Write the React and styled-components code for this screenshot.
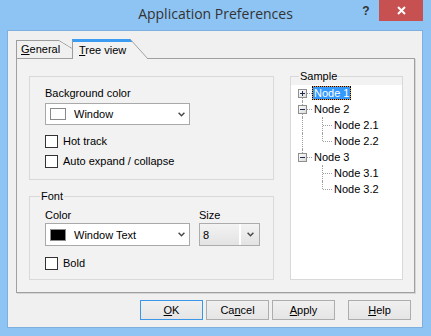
import React from 'react';
import styled, { createGlobalStyle } from 'styled-components';

const GlobalStyle = createGlobalStyle`
  * { box-sizing: border-box; }
  html, body { margin: 0; padding: 0; background: #8dc4f4; }
  body {
    font-family: "Liberation Sans", Arial, sans-serif;
    font-size: 11px;
    color: #000;
  }
`;

const treeRows = [
  { label: 'Node 1', selected: true, gutters: [{ down: true, right: true, box: '+' }] },
  { label: 'Node 2', gutters: [{ up: true, down: true, right: true, box: '-' }] },
  { label: 'Node 2.1', gutters: [{ up: true, down: true }, { up: true, down: true, right: true }] },
  { label: 'Node 2.2', gutters: [{ up: true, down: true }, { up: true, right: true }] },
  { label: 'Node 3', gutters: [{ up: true, right: true, box: '-' }] },
  { label: 'Node 3.1', gutters: [{}, { up: true, down: true, right: true }] },
  { label: 'Node 3.2', gutters: [{}, { up: true, right: true }] },
];

const Chevron = () => (
  <svg width="7" height="5" viewBox="0 0 7 5">
    <path d="M0.6 0.8 L3.5 3.7 L6.4 0.8" fill="none" stroke="#4a4a4a" strokeWidth="1.5" />
  </svg>
);

const Expander = ({ sign }) => (
  <ExpanderBox width="9" height="9" viewBox="0 0 9 9">
    <defs>
      <linearGradient id={`eg${sign === '+' ? 'p' : 'm'}`} x1="0" y1="0" x2="1" y2="1">
        <stop offset="0" stopColor="#ffffff" />
        <stop offset="1" stopColor="#d8d8d8" />
      </linearGradient>
    </defs>
    <rect x="0.5" y="0.5" width="8" height="8" fill={`url(#eg${sign === '+' ? 'p' : 'm'})`} stroke="#8e8f8f" />
    <path d="M2 4.5 H7" stroke="#1f2f4a" strokeWidth="1" />
    {sign === '+' && <path d="M4.5 2 V7" stroke="#1f2f4a" strokeWidth="1" />}
  </ExpanderBox>
);

export default function App() {
  return (
    <>
      <GlobalStyle />
      <Frame>
        <TitleBar>
          <span />
          <Title>Application Preferences</Title>
          <Controls>
            <HelpGlyph>?</HelpGlyph>
            <CloseButton>
              <svg width="9" height="9" viewBox="0 0 9 9">
                <path d="M1 1 L8 8 M8 1 L1 8" stroke="#fff" strokeWidth="2" />
              </svg>
            </CloseButton>
          </Controls>
        </TitleBar>

        <Client>
          <TabStrip>
            <Tab $width={57} $pad={4} $slantW={15} $slantH={9}>
              <span><u>G</u>eneral</span>
            </Tab>
            <Tab $active $width={76} $pad={6} $slantW={18} $slantH={20}>
              <span><u>T</u>ree view</span>
            </Tab>
          </TabStrip>

          <Panel>
            <LeftColumn>
              <PlainGroup>
                <FieldLabel>Background color</FieldLabel>
                <Combo $width={145} $height={22} $top={3}>
                  <Swatch $color="#fff" />
                  <ComboText>Window</ComboText>
                  <ArrowSlot><Chevron /></ArrowSlot>
                </Combo>
                <CheckRow $gap={10}><CheckBox />Hot track</CheckRow>
                <CheckRow $gap={7}><CheckBox />Auto expand / collapse</CheckRow>
              </PlainGroup>

              <FontGroup>
                <Legend $offset={-5}>Font</Legend>
                <FieldRow>
                  <Field>
                    <FieldLabel>Color</FieldLabel>
                    <Combo $width={145} $height={23} $top={1}>
                      <Swatch $color="#000" />
                      <ComboText>Window Text</ComboText>
                      <ArrowSlot><Chevron /></ArrowSlot>
                    </Combo>
                  </Field>
                  <Field>
                    <FieldLabel>Size</FieldLabel>
                    <Combo $width={61} $height={23} $top={1} $flat>
                      <ComboText $pad={3}>8</ComboText>
                      <DropZone><Chevron /></DropZone>
                    </Combo>
                  </Field>
                </FieldRow>
                <CheckRow $gap={11}><CheckBox />Bold</CheckRow>
              </FontGroup>
            </LeftColumn>

            <SampleGroup>
              <Legend $offset={8}>Sample</Legend>
              <Tree>
                {treeRows.map((row) => (
                  <TreeRow key={row.label}>
                    {row.gutters.map((g, i) => (
                      <Gutter key={i} $up={g.up} $down={g.down} $right={g.right}>
                        {g.box && <Expander sign={g.box} />}
                      </Gutter>
                    ))}
                    <NodeLabel $selected={row.selected}>{row.label}</NodeLabel>
                  </TreeRow>
                ))}
              </Tree>
            </SampleGroup>
          </Panel>

          <ButtonRow>
            <Button $default><u>O</u>K</Button>
            <Button $gap={3}>Ca<u>n</u>cel</Button>
            <Button $gap={3}><u>A</u>pply</Button>
            <Button $gap={13}><u>H</u>elp</Button>
          </ButtonRow>
        </Client>
      </Frame>
    </>
  );
}

// window frame
const Frame = styled.div`
  width: 431px;
  height: 336px;
  background: #8dc4f4;
  display: flex;
  flex-direction: column;
`;

const TitleBar = styled.div`
  height: 30px;
  flex: none;
  display: grid;
  grid-template-columns: 1fr auto 1fr;
  align-items: start;
`;

const Title = styled.div`
  font-family: "Open Sans", "Noto Sans", sans-serif;
  font-size: 14px;
  line-height: 28px;
  color: #333;
  white-space: nowrap;
`;

const Controls = styled.div`
  display: flex;
  justify-content: flex-end;
  padding-right: 8px;
`;

const HelpGlyph = styled.span`
  width: 26px;
  height: 21px;
  line-height: 22px;
  text-align: center;
  font-family: "Liberation Sans", Arial, sans-serif;
  font-weight: bold;
  font-size: 12px;
  color: #333;
`;

const CloseButton = styled.div`
  width: 44px;
  height: 21px;
  background: #c75050;
  display: flex;
  align-items: center;
  justify-content: center;
`;

const Client = styled.div`
  flex: 1;
  margin: 0 8px 8px 7px;
  background: #f0f0f0;
  border: 1px solid #7dafdf;
  display: flex;
  flex-direction: column;
  padding: 8px 7px 7px 8px;
`;

// tabs
const TabStrip = styled.div`
  display: flex;
  align-items: flex-end;
  height: 20px;
  margin-bottom: -1px;
  position: relative;
  z-index: 1;
`;

const Tab = styled.div`
  position: relative;
  width: ${(p) => p.$width}px;
  height: ${(p) => (p.$active ? 20 : 18)}px;
  margin-bottom: ${(p) => (p.$active ? 0 : 1)}px;
  margin-left: ${(p) => (p.$active ? -1 : 0)}px;
  z-index: ${(p) => (p.$active ? 2 : 1)};
  border-left: 1px solid #9c9c9c;
  border-right: 1px solid #9c9c9c;
  border-top: ${(p) => (p.$active ? '3px solid #3c9cf1' : '1px solid #9c9c9c')};
  background: ${(p) => (p.$active ? '#f2f2f2' : '#f0f0f0')};
  padding-left: ${(p) => p.$pad}px;
  padding-bottom: ${(p) => (p.$active ? 1 : 0)}px;
  display: flex;
  align-items: center;
  line-height: 13px;

  &::after {
    content: '';
    position: absolute;
    top: ${(p) => (p.$active ? -3 : -1)}px;
    right: -1px;
    width: ${(p) => p.$slantW}px;
    height: ${(p) => p.$slantH}px;
    background: linear-gradient(to bottom left, #f0f0f0 calc(50% - 0.7px), #9c9c9c 50%, transparent calc(50% + 0.7px));
  }
`;

const Panel = styled.div`
  flex: none;
  height: 235px;
  border: 1px solid #a0a0a0;
  box-shadow: 1px 1px 0 #d6d6d6;
  background: #f2f2f2;
  display: grid;
  grid-template-columns: 245px 113px;
  column-gap: 16px;
  align-items: start;
  padding: 11px 11px 0 12px;
`;

const LeftColumn = styled.div`
  display: flex;
  flex-direction: column;
`;

const PlainGroup = styled.div`
  margin-top: 6px;
  height: 104px;
  border: 1px solid #d9d9d9;
  padding: 10px 0 0 15px;
`;

const FontGroup = styled.fieldset`
  margin: 10px 0 0;
  height: 90px;
  min-width: 0;
  border: 1px solid #d9d9d9;
  padding: 0 0 0 15px;
`;

const SampleGroup = styled.fieldset`
  margin: 0;
  height: 210px;
  min-width: 0;
  border: 1px solid #d9d9d9;
  padding: 3px 0 0;
`;

const Legend = styled.legend`
  padding: 0 1px;
  margin-left: ${(p) => p.$offset}px;
  line-height: 12px;
  font-size: 11px;
`;

const FieldLabel = styled.div`
  line-height: 13px;
  height: 13px;
`;

const FieldRow = styled.div`
  display: flex;
  gap: 9px;
  margin-top: 7px;
`;

const Field = styled.div`
  display: flex;
  flex-direction: column;
`;

const Combo = styled.div`
  width: ${(p) => p.$width}px;
  height: ${(p) => p.$height}px;
  margin-top: ${(p) => p.$top}px;
  border: 1px solid ${(p) => (p.$flat ? '#acacac' : '#a9a9a9')};
  background: ${(p) => (p.$flat ? 'linear-gradient(#f3f3f3, #e3e3e3)' : '#fff')};
  display: flex;
  align-items: center;
  padding-left: ${(p) => (p.$flat ? 0 : 4)}px;
`;

const Swatch = styled.span`
  width: 16px;
  height: 12px;
  flex: none;
  background: ${(p) => p.$color};
  border: 1px solid #8a8a8a;
  margin-right: 8px;
`;

const ComboText = styled.span`
  flex: 1;
  padding-left: ${(p) => p.$pad || 0}px;
  white-space: nowrap;
`;

const ArrowSlot = styled.span`
  display: flex;
  margin-right: 4px;
`;

const DropZone = styled.span`
  width: 20px;
  height: 100%;
  border-left: 2px solid #fff;
  display: flex;
  align-items: center;
  justify-content: center;
`;

const CheckRow = styled.div`
  display: flex;
  align-items: center;
  height: 13px;
  line-height: 13px;
  margin-top: ${(p) => p.$gap}px;
`;

const CheckBox = styled.span`
  width: 13px;
  height: 13px;
  flex: none;
  border: 1px solid #333;
  background: #fff;
  margin-right: 5px;
`;

// tree view
const Tree = styled.div`
  background: #fff;
  height: 194px;
  padding-left: 1px;
`;

const TreeRow = styled.div`
  display: flex;
  height: 16px;
`;

const Gutter = styled.span`
  position: relative;
  width: 20px;
  flex: none;

  &::before {
    content: '';
    display: ${(p) => (p.$up || p.$down ? 'block' : 'none')};
    position: absolute;
    left: 10px;
    top: ${(p) => (p.$up ? 0 : 8)}px;
    bottom: ${(p) => (p.$down ? 0 : 8)}px;
    border-left: 1px dotted #a0a0a0;
  }

  &::after {
    content: '';
    display: ${(p) => (p.$right ? 'block' : 'none')};
    position: absolute;
    left: 11px;
    right: 0;
    top: 8px;
    border-top: 1px dotted #a0a0a0;
  }
`;

const ExpanderBox = styled.svg`
  position: absolute;
  left: 6px;
  top: 4px;
  z-index: 1;
`;

const NodeLabel = styled.span`
  height: 14px;
  margin-top: 1px;
  line-height: 12px;
  padding: 0 1px;
  white-space: nowrap;
  border: 1px ${(p) => (p.$selected ? 'dotted #000' : 'solid transparent')};
  color: ${(p) => (p.$selected ? '#fff' : '#000')};
  background: ${(p) => (p.$selected ? 'linear-gradient(#3399ff, #3399ff) padding-box, #e9a13b' : 'transparent')};
`;

// buttons
const ButtonRow = styled.div`
  display: flex;
  justify-content: flex-end;
  margin-top: 7px;
  padding-right: 4px;
`;

const Button = styled.button`
  width: 63px;
  height: 20px;
  padding: 0;
  margin-left: ${(p) => p.$gap || 0}px;
  border: 1px solid ${(p) => (p.$default ? '#3c96e8' : '#adadad')};
  background: linear-gradient(#f0f0f0, #e5e5e5);
  font-family: "Liberation Sans", Arial, sans-serif;
  font-size: 11px;
  color: #000;
`;
